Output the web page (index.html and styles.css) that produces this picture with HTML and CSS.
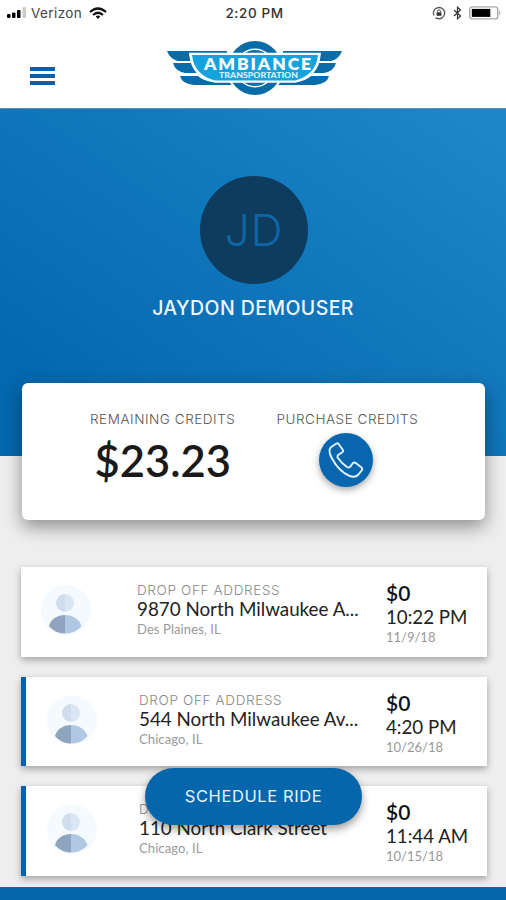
FILE: index.html
```html
<!DOCTYPE html>
<html lang="en">
  <head>
    <meta charset="UTF-8" />
    <meta name="viewport" content="width=device-width, initial-scale=1.0" />
    <title>Ambiance Transportation</title>
    <link rel="stylesheet" href="styles.css">
  </head>
  <body>
    <svg class="defs" width="0" height="0">
      <symbol id="avatar" viewBox="0 0 52 52">
        <circle cx="26" cy="26" r="25" fill="#f5faff" />
        <path d="M25 10a9 9 0 0 0 0 18z" fill="#d0dded" />
        <path d="M25 10a9 9 0 0 1 0 18z" fill="#dbe6f4" />
        <path d="M25 31c-8 0-14 4-16 11 4 5 10 7.500 16 7.500z" fill="#8fa4bf" />
        <path d="M25 31c8 0 14 4 16.500 11-4 5-10 7.500-16.500 7.500z" fill="#b1c8e4" />
      </symbol>
    </svg>
    <div class="app">
      <header class="header">
        <div class="status-bar">
          <div class="status-left">
            <svg width="20" height="12" viewBox="0 0 20 12">
              <rect x="0" y="7" width="3.500" height="4" rx="1" />
              <rect x="5" y="5.500" width="3.500" height="5.500" rx="1" />
              <rect x="10" y="3" width="3.500" height="8" rx="1" />
              <rect x="15.500" y="0" width="3.500" height="11" rx="1" fill="#ccc" />
            </svg>
            <span class="carrier">Verizon</span>
            <svg width="18" height="13" viewBox="0 0 18 13" fill="none" stroke="#111" stroke-width="2.200">
              <path d="M1 5Q9-2 17 5" />
              <path d="M4 8Q9 3.500 14 8" />
              <path d="M6.700 9.500Q9 7.700 11.300 9.500L9 12z" fill="#111" stroke="none" />
            </svg>
          </div>
          <span class="clock">2:20 PM</span>
          <div class="status-right">
            <svg width="14" height="14" viewBox="0 0 14 14" fill="none" stroke="#555" stroke-width="1.300">
              <path d="M2 9.500A5.600 5.600 0 1 1 5 12.300M3.500 12l2.500.5" />
              <path d="M5.500 6.500V5.300a1.500 1.500 0 0 1 3 0v1.200" stroke-width="1" />
              <rect x="4.600" y="6.300" width="4.800" height="3.500" fill="#333" stroke="none" />
            </svg>
            <svg width="9" height="14" viewBox="0 0 9 14" fill="none" stroke="#333" stroke-width="1.200">
              <path d="M1 4l6.500 6-3 2.800V1.200l3 2.800L1 10" />
            </svg>
            <svg width="33" height="14" viewBox="0 0 33 14">
              <rect x="0.700" y="0.900" width="28" height="12" rx="2.500" fill="#fff" stroke="#aaa" stroke-width="1.400" />
              <rect x="2.800" y="2.900" width="18.500" height="8" fill="#000" />
              <path d="M30 4.500q2.500 2.500 0 5z" fill="#aaa" />
            </svg>
          </div>
        </div>
        <div class="nav">
          <div class="menu-btn">
            <span></span>
            <span></span>
            <span></span>
          </div>
          <svg class="logo" width="178" height="58" viewBox="0 0 178 58">
            <g fill="#086ca9">
              <path d="M1 12H61V15H23L25 22H12Q4 20 1 12z" />
              <path d="M7 24H26L31 34H19Q9 32 7 24z" />
              <path d="M14 37H32Q37 42 48 43H72V46H28Q16 45 14 37z" />
              <path d="M176 12H117V15H154L152 22H165Q173 20 176 12z" />
              <path d="M170 24H151L146 34H158Q168 32 170 24z" />
              <path d="M163 37H145Q140 42 129 43H105V46H149Q161 45 163 37z" />
            </g>
            <circle cx="89" cy="29" r="29" fill="#fff" />
            <circle cx="89" cy="29" r="27" fill="#086ca9" />
            <circle cx="89" cy="29" r="19.500" fill="#fff" />
            <circle cx="89" cy="29" r="18" fill="#086ca9" />
            <path d="M25 15.500H153Q151 37 129 42H49Q27 37 25 15.500z" fill="#16a2dc" stroke="#fff" stroke-width="3.500" />
            <path d="M26 16H152Q150 36 129 41.500H49Q28 36 26 16z" fill="#16a2dc" />
            <text class="logo-name" x="38" y="31" textLength="107">AMBIANCE</text>
            <text class="logo-sub" x="53" y="38.800" textLength="79" lengthAdjust="spacingAndGlyphs">TRANSPORTATION</text>
          </svg>
        </div>
      </header>

      <section class="hero">
        <div class="initials">JD</div>
        <h1 class="user-name">JAYDON DEMOUSER</h1>
      </section>

      <section class="credits">
        <div class="credit-col">
          <span class="label">REMAINING CREDITS</span>
          <span class="amount">$23.23</span>
        </div>
        <div class="credit-col">
          <span class="label">PURCHASE CREDITS</span>
          <div class="call-btn">
            <svg width="36" height="36" viewBox="0 0 36 36" fill="none" stroke="#e6f3ff" stroke-width="1.900" stroke-linejoin="round">
              <path d="M8.500 1.500L2.800 5.300C.8 7.500 1.200 11.500 4 16.500C8 24 14 30.500 21 33.700C25 35.500 28 35.200 30.500 32.500L34 28Q34.700 26.500 33.500 25.500L27.500 20.800Q26 20 24.800 21.200L22.300 24.600Q21 26 19 25C15 22.500 12 19 9.700 15.800Q9 14 10.500 12.800L14.300 10.300Q15.500 9.200 14.800 7.800L10.600 2Q9.500 1 8.500 1.500z" />
            </svg>
          </div>
        </div>
      </section>

      <main class="rides">
        <div class="ride">
          <svg class="avatar"><use href="#avatar" /></svg>
          <div class="address">
            <span class="address-label">DROP OFF ADDRESS</span>
            <span class="street">9870 North Milwaukee A...</span>
            <span class="city">Des Plaines, IL</span>
          </div>
          <div class="fare">
            <span class="price">$0</span>
            <span class="time">10:22 PM</span>
            <span class="date">11/9/18</span>
          </div>
        </div>
        <div class="ride marked">
          <svg class="avatar"><use href="#avatar" /></svg>
          <div class="address">
            <span class="address-label">DROP OFF ADDRESS</span>
            <span class="street">544 North Milwaukee Av...</span>
            <span class="city">Chicago, IL</span>
          </div>
          <div class="fare">
            <span class="price">$0</span>
            <span class="time">4:20 PM</span>
            <span class="date">10/26/18</span>
          </div>
        </div>
        <div class="ride marked">
          <svg class="avatar"><use href="#avatar" /></svg>
          <div class="address">
            <span class="address-label">DROP OFF ADDRESS</span>
            <span class="street">110 North Clark Street</span>
            <span class="city">Chicago, IL</span>
          </div>
          <div class="fare">
            <span class="price">$0</span>
            <span class="time">11:44 AM</span>
            <span class="date">10/15/18</span>
          </div>
        </div>
      </main>

      <button class="schedule-btn">SCHEDULE RIDE</button>
      <footer class="bottom-bar"></footer>
    </div>
  </body>
</html>
```

FILE: styles.css
```css
* {
  box-sizing: border-box;
}

body {
  margin: 0;
  font-family: Lato, sans-serif;
  color: #222;
}

.defs {
  position: absolute;
}

.app {
  position: relative;
  display: flex;
  flex-direction: column;
  height: 900px;
  overflow: hidden;
  background-color: #eeeeee;
}

.header {
  height: 109px;
  background-color: #fff;
  border-bottom: 1px solid #5c8fb5;
}

.status-bar {
  display: grid;
  grid-template-columns: 1fr auto 1fr;
  align-items: center;
  height: 26px;
  padding: 0 4px 0 7px;
  font-family: Inter, sans-serif;
  font-size: 13px;
}

.status-left,
.status-right {
  display: flex;
  align-items: center;
}

.carrier {
  width: 51px;
  margin: 0 7px 0 4px;
  font-size: 13.5px;
  letter-spacing: 0.4px;
  color: #444;
}

.clock {
  font-weight: 500;
  font-size: 13.5px;
  letter-spacing: 0.6px;
  color: #333;
}

.status-right {
  justify-content: flex-end;
  gap: 7px;
}

.nav {
  display: flex;
  align-items: flex-start;
  padding: 13px 0 0 30px;
}

.menu-btn {
  display: flex;
  flex-direction: column;
  gap: 3px;
  width: 25px;
  margin-top: 28px;
}

.menu-btn span {
  height: 4px;
  background-color: #0b5fa9;
}

.logo {
  margin-left: 111px;
}

.logo-name {
  font-family: Lato, sans-serif;
  font-size: 17.5px;
  font-weight: 800;
  fill: #fff;
}

.logo-sub {
  font-family: Lato, sans-serif;
  font-size: 7px;
  font-weight: 900;
  fill: #d9f3ff;
}

.hero {
  display: flex;
  flex-direction: column;
  align-items: center;
  height: 347px;
  padding-top: 67px;
  background: linear-gradient(35deg, #0468ae 15%, #1d85c8 95%);
}

.initials {
  width: 108px;
  height: 108px;
  margin-left: 2px;
  border-radius: 50%;
  background-color: #0d3c5f;
  color: #0f66a6;
  font-family: Inter, sans-serif;
  font-size: 44px;
  font-weight: 300;
  line-height: 108px;
  letter-spacing: 1px;
  text-align: center;
}

.user-name {
  margin: 12px 0 0;
  font-family: Inter, sans-serif;
  font-size: 19.5px;
  font-weight: 500;
  line-height: 24px;
  letter-spacing: 0.4px;
  color: #eef6ff;
}

.credits {
  position: relative;
  display: flex;
  gap: 41px;
  height: 137px;
  margin: -73px 21px 0 22px;
  padding: 27px 0 0 68px;
  border-radius: 6px;
  background-color: #fff;
  box-shadow: 0 7px 18px rgba(0, 0, 0, 0.4);
}

.credit-col {
  display: flex;
  flex-direction: column;
  align-items: center;
}

.label {
  font-family: Inter, sans-serif;
  font-size: 13.5px;
  font-weight: 300;
  line-height: 18px;
  letter-spacing: 0.55px;
  color: #555;
  white-space: nowrap;
}

.amount {
  font-size: 43.5px;
  font-weight: 600;
  line-height: 54px;
  margin-top: 5px;
  color: #1a1a1a;
}

.call-btn {
  display: flex;
  align-items: center;
  justify-content: center;
  width: 54px;
  height: 54px;
  margin: 5px 2px 0 0;
  border-radius: 50%;
  background-color: #0766ae;
  box-shadow: 0 3px 7px rgba(0, 0, 0, 0.35);
}

.rides {
  display: flex;
  flex-direction: column;
  gap: 20px;
  margin: 47px 19px 0 21px;
}

.ride {
  display: flex;
  height: 89.500px;
  padding-left: 19px;
  background-color: #fff;
  box-shadow: 0 3px 7px rgba(0, 0, 0, 0.32);
}

.ride.marked {
  padding-left: 20px;
  border-left: 5px solid #0561ac;
}

.avatar {
  width: 52px;
  height: 52px;
  margin: 17px 45px 0 0;
}

.marked .avatar {
  margin-right: 41px;
}

.address {
  display: flex;
  flex-direction: column;
  width: 249px;
  padding-top: 15px;
  white-space: nowrap;
}

.marked .address {
  width: 247px;
}

.address-label {
  font-family: Inter, sans-serif;
  font-size: 13.500px;
  font-weight: 300;
  line-height: 17px;
  letter-spacing: 0.65px;
  color: #888;
}

.street {
  font-size: 18.8px;
  line-height: 20px;
}

.city {
  font-size: 13px;
  line-height: 21px;
  letter-spacing: 0.1px;
  color: #999;
}

.fare {
  display: flex;
  flex-direction: column;
  padding-top: 13px;
  white-space: nowrap;
}

.price {
  font-size: 21px;
  font-weight: 600;
  line-height: 25px;
  color: #111;
}

.time {
  font-size: 18.7px;
  line-height: 24px;
}

.date {
  font-size: 13px;
  line-height: 16px;
  color: #999;
}

/* floats over the last ride in the list */
.schedule-btn {
  position: absolute;
  left: 145px;
  bottom: 75px;
  width: 217px;
  height: 57px;
  padding: 0 0 2px;
  border: none;
  border-radius: 29px;
  background-color: #0566ab;
  color: #e8f3ff;
  font-family: Inter, sans-serif;
  font-size: 16.5px;
  letter-spacing: 0.6px;
  box-shadow: 0 4px 8px rgba(0, 0, 0, 0.4);
  cursor: pointer;
}

.bottom-bar {
  height: 13px;
  margin-top: auto;
  flex-shrink: 0;
  background-color: #0566ab;
}
```
